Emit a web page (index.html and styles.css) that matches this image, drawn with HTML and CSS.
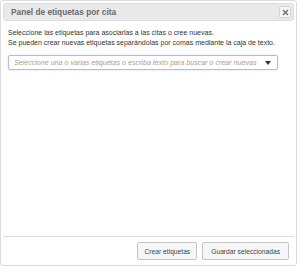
FILE: index.html
```html
<!DOCTYPE html>
<html>
<head>
<meta charset="utf-8">
<link rel="stylesheet" href="styles.css">
</head>
<body>
<div class="dialog">
  <div class="titlebar">
    <span class="title">Panel de etiquetas por cita</span>
    <button class="close" aria-label="Cerrar">
      <svg width="7" height="7" viewBox="0 0 7 7"><path d="M1 1L6 6M6 1L1 6" stroke="#777" stroke-width="1.6"/></svg>
    </button>
  </div>
  <div class="content">
    <p class="help">Seleccione las etiquetas para asociarlas a las citas o cree nuevas.<br>Se pueden crear nuevas etiquetas separándolas por comas mediante la caja de texto.</p>
    <div class="select">
      <span class="placeholder">Seleccione una o varias etiquetas o escriba texto para buscar o crear nuevas</span>
      <span class="arrow"></span>
    </div>
  </div>
  <div class="footer">
    <button class="btn">Crear etiquetas</button>
    <button class="btn wide">Guardar seleccionadas</button>
  </div>
</div>
</body>
</html>
```
FILE: styles.css
```css
html, body { margin: 0; padding: 0; background: #fff; }
body { font-family: "Liberation Sans", Arial, sans-serif; font-size: 7px; color: #333; }
.dialog {
  width: 297px;
  height: 266px;
  margin: 0;
  border: 1px solid #dcdcdc;
  border-radius: 3px;
  box-sizing: border-box;
  display: flex;
  flex-direction: column;
  padding: 2px 2px 1px 2px;
}
.titlebar {
  height: 18px;
  box-sizing: border-box;
  background: #e9e9e9;
  border: 1px solid #dddddd;
  border-radius: 3px;
  display: flex;
  align-items: center;
  justify-content: space-between;
  padding: 0 2px 0 7px;
  flex: none;
}
.title { font-weight: bold; color: #6a6a6a; font-size: 8.3px; }
.close {
  width: 12px; height: 12px; padding: 0; margin: 0;
  border: 1px solid #d3d3d3; background: #f6f6f6; border-radius: 2px;
  display: flex; align-items: center; justify-content: center;
}
.content { flex: 1; padding: 7px 5px 0 5px; }
.help { margin: 0 0 7px; line-height: 10px; color: #333; white-space: nowrap; font-size: 7px; }
.select {
  width: 270px; height: 15px; box-sizing: border-box;
  border: 1px solid #a3c0ec; border-radius: 2px;
  display: flex; align-items: center; justify-content: space-between;
  padding: 0 6px 0 5px;
  box-shadow: 0 0 2px #c8daf5;
}
.placeholder { font-style: italic; color: #b09a90; font-size: 7.1px; white-space: nowrap; overflow: hidden; }
.arrow { flex: none; width: 0; height: 0; border-left: 3px solid transparent; border-right: 3px solid transparent; border-top: 4px solid #333; }
.footer {
  flex: none;
  height: 28px;
  box-sizing: border-box;
  border-top: 1px solid #dddddd;
  display: flex; justify-content: flex-end; align-items: center; gap: 5px;
  padding: 1px 5px 0 0;
}
.btn {
  font-family: "Liberation Sans", Arial, sans-serif; font-size: 6.7px; color: #444;
  height: 18px; padding: 0 6px;
  background: #f6f6f6; border: 1px solid #c5c5c5; border-radius: 2px;
}
.btn.wide { padding: 0 8px; }
```
